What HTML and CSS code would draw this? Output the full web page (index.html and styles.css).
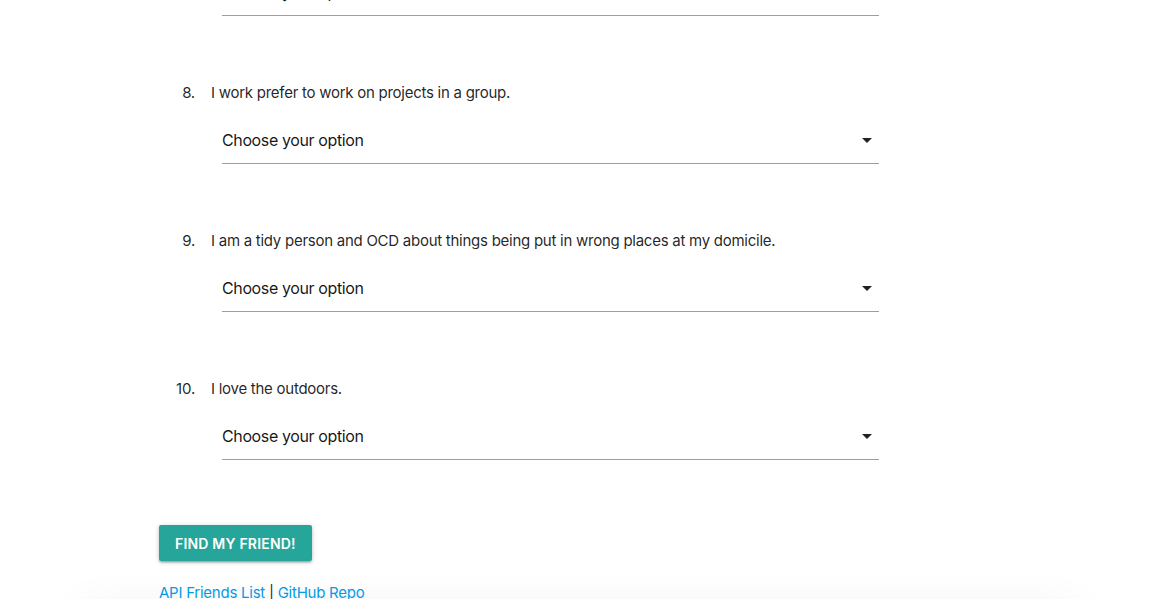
FILE: index.html
```html
<!DOCTYPE html>
<html lang="en">
<head>
<meta charset="utf-8">
<title>Friend Finder Survey</title>
<link rel="stylesheet" href="styles.css">
</head>
<body>
<main class="container">
  <ol class="questions">
    <li class="question">
      <span class="num">7.</span>
      <div class="body">
        <p class="q-text">I enjoy trying new foods and cuisines from around the world.</p>
        <div class="select">
          <span class="select-value">Choose your option</span>
          <svg class="caret" width="24" height="24" viewBox="0 0 24 24"><path d="M7 10l5 5 5-5z"/></svg>
        </div>
      </div>
    </li>
    <li class="question">
      <span class="num">8.</span>
      <div class="body">
        <p class="q-text">I work prefer to work on projects in a group.</p>
        <div class="select">
          <span class="select-value">Choose your option</span>
          <svg class="caret" width="24" height="24" viewBox="0 0 24 24"><path d="M7 10l5 5 5-5z"/></svg>
        </div>
      </div>
    </li>
    <li class="question">
      <span class="num">9.</span>
      <div class="body">
        <p class="q-text">I am a tidy person and OCD about things being put in wrong places at my domicile.</p>
        <div class="select">
          <span class="select-value">Choose your option</span>
          <svg class="caret" width="24" height="24" viewBox="0 0 24 24"><path d="M7 10l5 5 5-5z"/></svg>
        </div>
      </div>
    </li>
    <li class="question">
      <span class="num">10.</span>
      <div class="body">
        <p class="q-text">I love the outdoors.</p>
        <div class="select">
          <span class="select-value">Choose your option</span>
          <svg class="caret" width="24" height="24" viewBox="0 0 24 24"><path d="M7 10l5 5 5-5z"/></svg>
        </div>
      </div>
    </li>
  </ol>
  <button class="btn" type="button">Find my friend!</button>
  <p class="links"><a href="#">API Friends List</a> | <a href="#">GitHub Repo</a></p>
</main>
<footer class="footer-card"></footer>
</body>
</html>
```
FILE: styles.css
```css
html, body {
  margin: 0;
  padding: 0;
  background: #fff;
}
body {
  font-family: Inter, "Noto Sans", "Liberation Sans", sans-serif;
  color: rgba(0, 0, 0, 0.87);
  overflow: hidden;
}
.container {
  width: 840px;
  margin: -66px auto 0;
}
.questions {
  list-style: none;
  margin: 0;
  padding: 0;
}
.question {
  display: grid;
  grid-template-columns: 52px 1fr;
  padding-bottom: 66px;
}
.num {
  text-align: right;
  padding-right: 16px;
  font-size: 15px;
  line-height: 22px;
  letter-spacing: -0.2px;
}
.q-text {
  margin: 0 0 12px;
  font-size: 15px;
  line-height: 22px;
  letter-spacing: -0.26px;
}
.select {
  margin-left: 11px;
  width: 657px;
  height: 47px;
  border-bottom: 1px solid #9e9e9e;
  display: flex;
  align-items: center;
  justify-content: space-between;
}
.select-value {
  font-size: 16px;
  letter-spacing: -0.38px;
  color: rgba(0, 0, 0, 0.92);
}
.caret {
  fill: rgba(0, 0, 0, 0.87);
  flex: none;
  margin-top: 1px;
}
.btn {
  display: block;
  margin: -1px 0 0;
  height: 36px;
  padding: 0 16px;
  border: none;
  border-radius: 2px;
  background: #26a69a;
  color: #fff;
  font-family: inherit;
  font-size: 14px;
  font-weight: 600;
  letter-spacing: 0.2px;
  text-transform: uppercase;
  box-shadow: 0 2px 2px 0 rgba(0,0,0,.14), 0 3px 1px -2px rgba(0,0,0,.12), 0 1px 5px 0 rgba(0,0,0,.2);
}
.links {
  margin: 21px 0 0;
  font-size: 15px;
  line-height: 22px;
  letter-spacing: -0.25px;
}
.links a {
  color: #039be5;
  text-decoration: none;
}
.footer-card {
  width: 1000px;
  height: 120px;
  margin: 0 auto;
  box-shadow: 0 0 40px rgba(0,0,0,0.05);
}
```
